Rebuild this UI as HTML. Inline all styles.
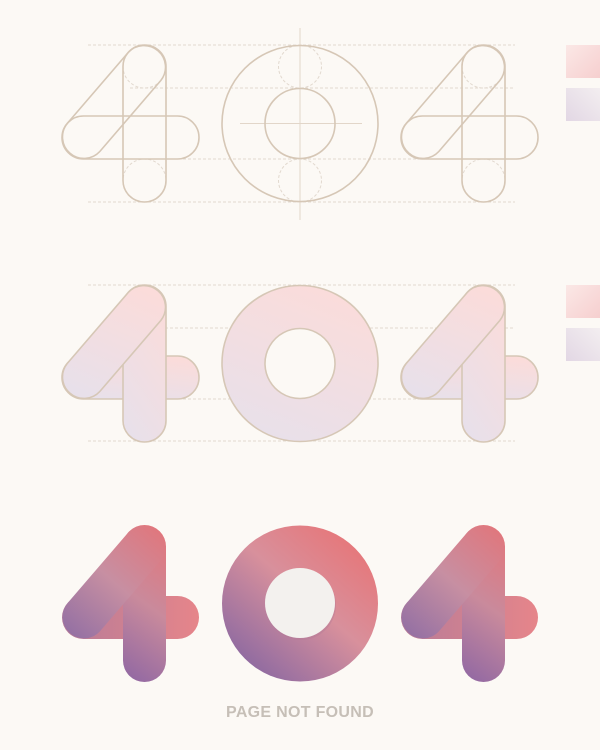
<!DOCTYPE html>
<html><head><meta charset="utf-8"><style>
html,body{margin:0;padding:0;background:#fcf9f5;width:600px;height:750px;overflow:hidden}
svg{display:block}
</style></head><body>
<svg width="600" height="750" viewBox="0 0 600 750" xmlns="http://www.w3.org/2000/svg">
<defs>
<linearGradient id="mid" x1="0.7" y1="0" x2="0.3" y2="1">
<stop offset="0" stop-color="#fbdcda"/><stop offset="1" stop-color="#e8e0ea"/></linearGradient>
<linearGradient id="gv" x1="0.6" y1="0" x2="0.4" y2="1">
<stop offset="0" stop-color="#e2777c"/><stop offset="0.5" stop-color="#c98a9c"/><stop offset="1" stop-color="#966ba2"/></linearGradient>
<linearGradient id="gd" x1="0.9" y1="0" x2="0.1" y2="1">
<stop offset="0" stop-color="#e0777d"/><stop offset="0.5" stop-color="#c78fa2"/><stop offset="1" stop-color="#9470a3"/></linearGradient>
<linearGradient id="gh" x1="0" y1="0.5" x2="1" y2="0.5">
<stop offset="0" stop-color="#b77c98"/><stop offset="1" stop-color="#e6858a"/></linearGradient>
<linearGradient id="botc" x1="0.85" y1="0.1" x2="0.15" y2="0.9">
<stop offset="0" stop-color="#e6777a"/><stop offset="0.45" stop-color="#d8909c"/><stop offset="1" stop-color="#8e6aa1"/></linearGradient>
<linearGradient id="sw1" x1="0" y1="0" x2="1" y2="1"><stop offset="0" stop-color="#fbe8e6"/><stop offset="1" stop-color="#f6cfcf"/></linearGradient>
<linearGradient id="sw2" x1="1" y1="0" x2="0" y2="1"><stop offset="0" stop-color="#f3eef0"/><stop offset="1" stop-color="#e2d7e4"/></linearGradient>
<g id="four">
<rect x="123" y="45" width="43" height="157" rx="21.5"/>
<rect x="62" y="116" width="137" height="43" rx="21.5"/>
<path d="M128.2,52.5 L67.2,123.5 A21.5 21.5 0 0 0 99.8,151.5 L160.8,80.5 A21.5 21.5 0 0 0 128.2,52.5 Z"/>
</g>
<g id="four2">
<rect x="62" y="116" width="137" height="43" rx="21.5"/>
<rect x="123" y="45" width="43" height="157" rx="21.5"/>
<path d="M128.2,52.5 L67.2,123.5 A21.5 21.5 0 0 0 99.8,151.5 L160.8,80.5 A21.5 21.5 0 0 0 128.2,52.5 Z"/>
</g>
<g id="four3">
<rect x="62" y="116" width="137" height="43" rx="21.5" fill="url(#gh)"/>
<rect x="123" y="45" width="43" height="157" rx="21.5" fill="url(#gv)"/>
<path d="M128.2,52.5 L67.2,123.5 A21.5 21.5 0 0 0 99.8,151.5 L160.8,80.5 A21.5 21.5 0 0 0 128.2,52.5 Z" fill="url(#gd)"/>
</g>
</defs>

<rect x="566" y="45" width="34" height="33" fill="url(#sw1)"/>
<rect x="566" y="88" width="34" height="33" fill="url(#sw2)"/>
<rect x="566" y="285" width="34" height="33" fill="url(#sw1)"/>
<rect x="566" y="328" width="34" height="33" fill="url(#sw2)"/>

<g stroke="#e2d9cf" stroke-width="1" stroke-dasharray="3,2" fill="none">
<line x1="88" y1="45" x2="515" y2="45"/>
<line x1="130" y1="88" x2="515" y2="88"/>
<line x1="88" y1="159" x2="470" y2="159"/>
<line x1="88" y1="202" x2="515" y2="202"/>
<circle cx="300" cy="66.5" r="21.5"/><circle cx="300" cy="180.5" r="21.5"/>
<circle cx="144.5" cy="66.5" r="21.5"/><circle cx="144.5" cy="180.5" r="21.5"/>
<circle cx="483.5" cy="66.5" r="21.5"/><circle cx="483.5" cy="180.5" r="21.5"/>
<line x1="88" y1="285" x2="515" y2="285"/>
<line x1="130" y1="328" x2="515" y2="328"/>
<line x1="88" y1="399" x2="470" y2="399"/>
<line x1="88" y1="441" x2="515" y2="441"/>
</g>
<g stroke="#e2d6c9" stroke-width="1" fill="none">
<line x1="300" y1="28" x2="300" y2="220"/>
<line x1="240" y1="123.5" x2="362" y2="123.5"/>
</g>
<g stroke="#d6c7b6" stroke-width="1.6" fill="none">
<use href="#four"/>
<use href="#four" transform="translate(339,0)"/>
<circle cx="300" cy="123.5" r="78"/>
<circle cx="300" cy="123.5" r="35"/>
</g>

<g transform="translate(0,240)" stroke="#d6c7b6" stroke-width="1.6" fill="url(#mid)">
<use href="#four2"/>
<use href="#four2" transform="translate(339,0)"/>
<path d="M300,45.5 a78,78 0 1 0 0.01,0 Z M300,88.5 a35,35 0 1 1 -0.01,0 Z" fill-rule="evenodd"/>
</g>

<use href="#four3" transform="translate(0,480)"/>
<use href="#four3" transform="translate(339,480)"/>
<circle cx="300" cy="603.5" r="78" fill="url(#botc)"/>
<circle cx="301" cy="605" r="35" fill="#b47a95" opacity="0.4"/>
<circle cx="300" cy="603" r="35" fill="#f3f1ee"/>

<text x="300" y="717" text-anchor="middle" font-family="Liberation Sans, sans-serif" font-weight="bold" font-size="16" fill="#c6bfb7" letter-spacing="0.3">PAGE NOT FOUND</text>
</svg>
</body></html>
